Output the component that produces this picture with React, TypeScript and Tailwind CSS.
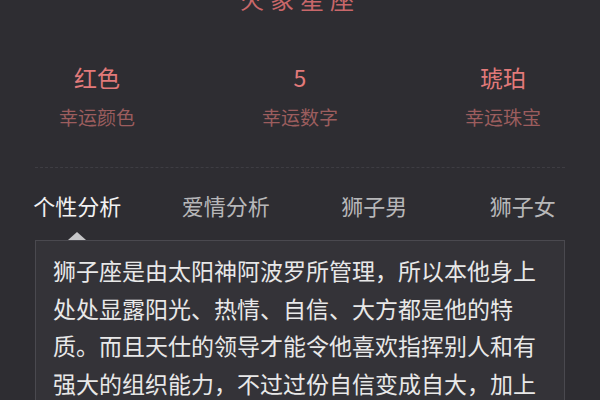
const font = { fontFamily: '"Noto Sans CJK SC", "Noto Sans", sans-serif' };

const lucky = [
  { value: "红色", label: "幸运颜色" },
  { value: "5", label: "幸运数字" },
  { value: "琥珀", label: "幸运珠宝" },
];

const tabs = ["个性分析", "爱情分析", "狮子男", "狮子女"];

export default function App() {
  return (
    <div className="w-[600px] h-[400px] overflow-hidden bg-[#2e2d32]" style={font}>
      {/* Title (cut off at top) */}
      <div className="-mt-[16px] h-[30px] text-center text-[24px] leading-[30px] tracking-[6px] text-[#c9676a]">
        火象星座
      </div>

      {/* Lucky items */}
      <div className="mt-[48px] flex justify-between px-[37px]">
        {lucky.map((item) => (
          <div key={item.label} className="w-[120px] flex flex-col items-center">
            <div className="text-[23px] leading-[30px] text-[#e27a7a]">{item.value}</div>
            <div className="mt-[12px] text-[19px] leading-[26px] text-[#9c5d5e]">{item.label}</div>
          </div>
        ))}
      </div>

      {/* Divider */}
      <div className="mx-[35px] mt-[37px] border-t border-dashed border-[#3e3d43]" />

      {/* Tabs */}
      <div className="mt-[22px] grid grid-cols-4 px-[3px] text-center text-[22px] leading-[30px]">
        {tabs.map((t, i) => (
          <div key={t} className={i === 0 ? "text-[#f2f2f2]" : "text-[#b7b7b9]"}>
            {t}
          </div>
        ))}
      </div>

      {/* Arrow */}
      <div className="mt-[12px] ml-[68px] h-0 w-0 border-x-[9px] border-b-[8px] border-x-transparent border-b-[#c6c6c8]" />

      {/* Content box */}
      <div className="mx-[35px] border border-[#4a494f] bg-[#343338] px-[17px] pt-[11px] pb-4">
        <p className="w-[495px] text-[23px] leading-[37.5px] text-[#e8e8e8]">
          狮子座是由太阳神阿波罗所管理，所以本他身上处处显露阳光、热情、自信、大方都是他的特质。而且天仕的领导才能令他喜欢指挥别人和有强大的组织能力，不过过份自信变成自大，加上
        </p>
      </div>
    </div>
  );
}
